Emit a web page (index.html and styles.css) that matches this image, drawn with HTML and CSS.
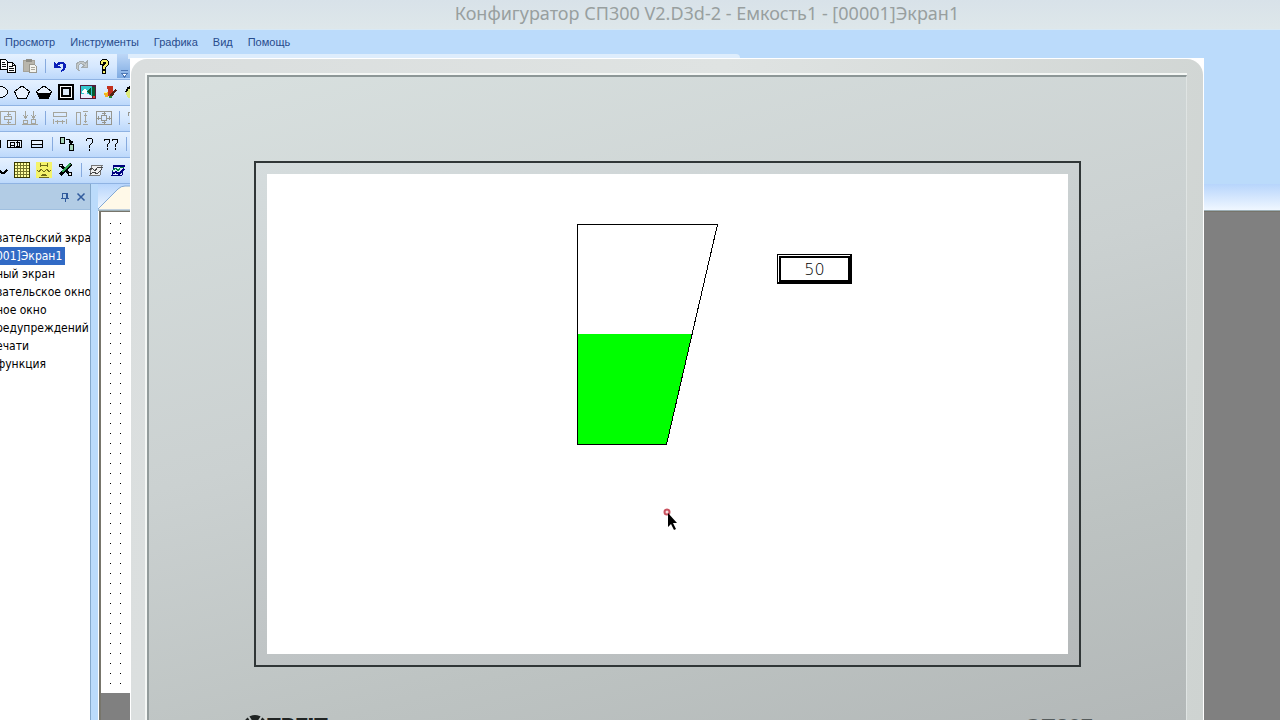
FILE: index.html
```html
<!DOCTYPE html>
<html lang="ru">

<head>
  <meta charset="UTF-8">
  <title>Конфигуратор СП300</title>
  <link rel="stylesheet" href="styles.css">
</head>

<body>

  <div class="app">
    <header class="titlebar">
      <h1>Конфигуратор СП300 V2.D3d-2 - Емкость1 - [00001]Экран1</h1>
    </header>

    <nav class="menubar">
      <a href="#">Просмотр</a>
      <a href="#">Инструменты</a>
      <a href="#">Графика</a>
      <a href="#">Вид</a>
      <a href="#">Помощь</a>
    </nav>

    <div class="toolbars">
      <div class="toolbar standard">
        <button type="button" aria-label="Копировать"><svg viewBox="0 0 16 16"><path d="M.5 1.500h5l2 2v8h-7z" fill="#fff" stroke="#000"/><path d="M2 4.500h3M2 6.500h4M2 8.500h4" stroke="#111"/><path d="M7.500 4.500h5l3 3v7h-8z" fill="#fff" stroke="#000"/><path d="M12.500 4.500v3h3M9 8.500h4M9 10.500h5M9 12.500h5" fill="none" stroke="#111"/></svg></button>
        <button type="button" aria-label="Вставить"><svg viewBox="0 0 16 16"><path d="M1.500 2.500h11v11h-11z" fill="#b9b6ac" stroke="#a5a298"/><path d="M4 1h6v3H4z" fill="#8e8c84"/><path d="M7.500 6.500h5l2 2v6h-7z" fill="#f4f4ee" stroke="#99978d"/><path d="M9 9.500h4M9 11.500h4" stroke="#aaa79c"/></svg></button>
        <span class="sep"></span>
        <button type="button" aria-label="Отменить"><svg viewBox="0 0 16 16"><path d="M2 3v7h7L6.500 7.500C9 4.500 12 6 11 9c0 2-1 3-2 4v1c3-1 5-3 5-6 0-5-6-6-9.500-2z" fill="#0a20b8"/></svg></button>
        <button type="button" aria-label="Вернуть"><svg viewBox="0 0 16 16"><path d="M13.500 3v6.500h-6l2.500-2C8 4.500 4 6 4 9c0 2 1 3 2 4-3-1-4-2-4-5 0-4 6-6 9.500-3z" fill="#c3c8c9" stroke="#a4abae"/></svg></button>
        <button type="button" aria-label="Справка"><svg viewBox="0 0 16 16"><path d="M4.500 6V3.500l2-2h4l2 2v3l-3 3V11h-3V8l3-3V4h-2v2z" fill="#f5ef6a" stroke="#000"/><path d="M6.500 12.500h3v3h-3z" fill="#f5ef6a" stroke="#000"/></svg></button>
        <button type="button" class="more" aria-label="Ещё"><svg viewBox="0 0 10 16"><path d="M2 8.500h7" stroke="#4f78b5"/><path d="M2 11h7l-3.500 4z" fill="#fff" stroke="#4f78b5"/></svg></button>
      </div>

      <div class="toolbar shapes">
        <button type="button" aria-label="Эллипс"><svg viewBox="0 0 16 16"><ellipse cx="8" cy="8" rx="7.500" ry="5.500" fill="#e9f2fd" stroke="#000"/></svg></button>
        <button type="button" aria-label="Многоугольник"><svg viewBox="0 0 16 16"><path d="M8 2l7.500 5.500-3 6.500h-9l-3-6.500z" fill="#e9f2fd" stroke="#000"/></svg></button>
        <button type="button" aria-label="Уровень в многоугольнике"><svg viewBox="0 0 16 16"><path d="M8 2l7.500 5.500-3 6.500h-9l-3-6.500z" fill="#e9f2fd" stroke="#000"/><path d="M1 9h14l-2.500 5h-9z"/></svg></button>
        <button type="button" aria-label="Рамка"><svg viewBox="0 0 16 16"><path d="M1 1h14v14H1z" fill="#fff" stroke="#000" stroke-width="2"/><path d="M4 4h8v8H4z" fill="#dce9f8" stroke="#000" stroke-width="2"/></svg></button>
        <button type="button" aria-label="Рисунок"><svg viewBox="0 0 16 16"><path d="M0 1h16v14H0z" fill="#501c3c"/><path d="M1 2h11v11H1z" fill="#35c7ce"/><path d="M1 8l4-4 3 4-3 2z" fill="#fff"/><path d="M1 10l5-1 6 3v2H1z" fill="#eef"/><path d="M7 8l4-5v9z" fill="#075c30"/><path d="M12 3h3v9h-3z" fill="#075c30"/><path d="M13 12h2v2h-2z" fill="#ef3c28"/></svg></button>
        <button type="button" aria-label="Анимация"><svg viewBox="0 0 16 16"><path d="M5 2h6v6l-4 4H4l2-4z" fill="#c3301d"/><path d="M2 8h4v5H3z" fill="#efb31e"/><path d="M8 10l5-5 2 1-6 8z" fill="#542313"/><path d="M7 12h3v2H7z" fill="#258b36"/><path d="M2 9l3-1" stroke="#fff79b"/></svg></button>
        <button type="button" aria-label="Цвет"><svg viewBox="0 0 16 16"><circle cx="8" cy="9" r="6" fill="#dce97a"/><path d="M2 8q2-6 7-5" fill="none" stroke="#000" stroke-width="2"/></svg></button>
      </div>

      <div class="toolbar align">
        <button type="button" aria-label="По центру"><svg viewBox="0 0 16 16"><path d="M.5 1.500h15v13H.5zM4.500 6.500h7v3h-7zM8.500 2v4M8.500 10v4M6.500 4.500h4M6.500 12.500h4" fill="none" stroke="#a5a59c"/></svg></button>
        <button type="button" aria-label="Вниз"><svg viewBox="0 0 16 16"><path d="M3.500 1v6M1 5l2.500 3L6 5M11.500 1v6M9 5l2.500 3L14 5M1.500 10.500h4v3h-4zM9.500 9.500h4v4h-4zM0 14.500h16" fill="none" stroke="#a5a59c"/></svg></button>
        <span class="sep"></span>
        <button type="button" aria-label="Ширина"><svg viewBox="0 0 16 16"><path d="M1.500 2.500h13v4h-13zM1.500 9v5M14.500 9v5M3 11.500h10M5.500 9.500v4M10.500 9.500v4" fill="none" stroke="#a5a59c"/></svg></button>
        <button type="button" aria-label="Высота"><svg viewBox="0 0 16 16"><path d="M2.500 2.500h4v12h-4zM9 1.500h5M9 14.500h5M11.500 3v10M10 5.500h3M10 11.500h3" fill="none" stroke="#a5a59c"/></svg></button>
        <button type="button" aria-label="Размер"><svg viewBox="0 0 16 16"><path d="M.5 1.500h15v13H.5zM5.500 5.500h5v5h-5zM8.500 2v3M8.500 11v3M1 8.500h4M11 8.500h4M6 3.500h4M6 12.500h4M2.500 6v4M13.500 6v4" fill="none" stroke="#96968f"/></svg></button>
        <span class="sep"></span>
        <button type="button" aria-label="Группа"><svg viewBox="0 0 16 16"><path d="M5 2.500H2M2.500 2v4M5 13.500H2" stroke="#96968f"/></svg></button>
      </div>

      <div class="toolbar controls">
        <button type="button" aria-label="Кнопка"><svg viewBox="0 0 16 16"><path d="M1 4.500h14v7H1z" fill="#e9f2fd" stroke="#000"/></svg></button>
        <button type="button" aria-label="Текст"><svg viewBox="0 0 16 16"><path d="M.5 4.500h14v7H.5z" fill="#e9f2fd" stroke="#000"/><path d="M3.500 12V6.500h4V12M4 9.500h3M10.500 5v6M9 6.500h3v4H9" fill="none" stroke="#000"/></svg></button>
        <button type="button" aria-label="Ввод"><svg viewBox="0 0 16 16"><path d="M2.500 4.500h11v4h-11z" fill="#e9f2fd" stroke="#000"/><path d="M2.500 9v2.500h11V9" fill="none" stroke="#000"/></svg></button>
        <span class="sep"></span>
        <button type="button" aria-label="Заменить"><svg viewBox="0 0 16 16"><path d="M1.500 1.500h4v6h-4zM10.500 8.500h4v6h-4z" fill="#a9d6b8" stroke="#000"/><path d="M7 3.500h3l2 2v2M10 5.500l2 2 2-2" fill="none" stroke="#000"/></svg></button>
        <button type="button" aria-label="Помощь"><svg viewBox="0 0 16 16"><path d="M5.500 5V3.500l1-1h4l1 1v3l-3 3v2M8.500 13v2" fill="none" stroke="#000"/></svg></button>
        <button type="button" aria-label="Контекстная помощь"><svg viewBox="0 0 16 16"><path d="M1.500 5V3.500h5v3l-2 2V11M4.500 12v2M9.500 5V3.500h5v3l-2 2V11M12.500 12v2" fill="none" stroke="#000"/></svg></button>
        <span class="sep"></span>
      </div>

      <div class="toolbar charts">
        <button type="button" aria-label="Кривая"><svg viewBox="0 0 16 16"><path d="M7 8l3 3h2l3-3" fill="none" stroke="#000" stroke-width="2"/></svg></button>
        <button type="button" aria-label="Таблица"><svg viewBox="0 0 16 16"><path d="M.5.500h15v15H.5z" fill="#ffffa0" stroke="#373700"/><path d="M3.500 1v14M6.500 1v14M9.500 1v14M12.500 1v14M1 3.500h14M1 6.500h14M1 9.500h14M1 12.500h14" stroke="#76762e"/></svg></button>
        <button type="button" aria-label="График"><svg viewBox="0 0 16 16"><path d="M0 0h16v16H0z" fill="#f4f36b"/><path d="M4.500 1v4M11.500 1v4M4 3.500h8M1 8l2 2 2-3 3 3 3-3 2 3 2-2M5 13.500h6M6 12.500h4M3 15.500h10" fill="none" stroke="#706c18"/></svg></button>
        <button type="button" aria-label="Инструменты"><svg viewBox="0 0 16 16"><path d="M2 3l11 10M13 2L2 13" stroke="#000" stroke-width="3"/><path d="M4 10l8-8" stroke="#35a653" stroke-width="2"/><path d="M1.500 2.500h3v2h-3zM10.500 10.500h3v3h-3z" fill="#eee" stroke="#000"/></svg></button>
        <span class="sep"></span>
        <button type="button" aria-label="Тренд"><svg viewBox="0 0 16 16"><path d="M4 3.500h10l-2 10H2z" fill="#eee" stroke="#777"/><path d="M1 8l3-2 3 3 3-4 5 1M2 12l4-2 3 2 5-5" fill="none" stroke="#444"/></svg></button>
        <button type="button" aria-label="Тренд в реальном времени"><svg viewBox="0 0 16 16"><path d="M4 3.500h10l-2 10H2z" fill="#dcecff" stroke="#000080"/><path d="M4 4h11" stroke="#000080" stroke-width="2"/><path d="M2 12l4-2 3 2 5-5" fill="none" stroke="#000080" stroke-width="2"/><path d="M2 9l4-3 2 3 3-4 3 1" fill="none" stroke="#078743"/></svg></button>
      </div>
    </div>

    <main class="workspace">
      <aside class="project">
        <div class="project-head">
          <button type="button" aria-label="Закрепить"><svg viewBox="0 0 10 10"><path d="M2.500 1v5M7.500 1v5M2 1.500h6M1 6.500h8M5 7v3M6.500 2v4" stroke="#315b9d"/></svg></button>
          <button type="button" aria-label="Закрыть"><svg viewBox="0 0 10 10"><path d="M1.500 1.500l7 7M8.500 1.500l-7 7" stroke="#315b9d" stroke-width="1.500" shape-rendering="auto"/></svg></button>
        </div>
        <ul class="tree">
          <li>вательский экран</li>
          <li class="selected"><span>001]Экран1</span></li>
          <li>ный экран</li>
          <li>вательское окно</li>
          <li>ное окно</li>
          <li>редупреждений</li>
          <li>ечати</li>
          <li>функция</li>
        </ul>
      </aside>

      <section class="editor">
        <div class="tabs">
          <svg class="tab" viewBox="0 0 60 26"><path d="M0 25L20 5q3-3 7-3h33v24H0z" fill="#fff9e8" stroke="#83a9d4"/></svg>
        </div>
        <div class="document">
          <svg class="page" shape-rendering="crispEdges">
            <pattern id="grid" x="9" y="11" width="10" height="10" patternUnits="userSpaceOnUse">
              <rect width="1" height="1" fill="#000"/>
            </pattern>
            <rect x="9" y="11" width="100%" height="100%" fill="url(#grid)"/>
          </svg>
        </div>
      </section>
    </main>

    <div class="caption-strip"></div>

    <!-- simulator window over the editor -->
    <div class="simulator">
      <div class="frame">
        <div class="panel">
          <div class="bezel">
            <div class="screen">
              <svg class="tank" viewBox="0 0 142 222" shape-rendering="crispEdges">
                <path d="M1 110h114L90 220H1z" fill="#0f0"/>
                <path d="M.5.500h140l-51 220H.5z" fill="none" stroke="#000"/>
              </svg>
              <input class="level" type="text" value="50" aria-label="Уровень">
              <svg class="pointer" viewBox="0 0 14 24">
                <circle cx="4" cy="5" r="2.500" fill="#f7dfe0" stroke="#ca5360" stroke-width="2"/>
                <path d="M5 6v14l3-3 3 6 2-1-3-6h4z" fill="#000"/>
              </svg>
            </div>
          </div>
          <div class="brand">
            <div class="maker">
              <svg viewBox="0 0 24 24"><circle cx="12" cy="12" r="12" fill="#202423"/><path d="M12 12L5 1M12 12l7-11M0 12h24" stroke="#bdc3c2" stroke-width="2"/><circle cx="12" cy="12" r="4" fill="#bdc3c2"/></svg>
              <span>TREIT</span>
            </div>
            <span class="model">СП307</span>
          </div>
        </div>
      </div>
    </div>
  </div>

</body>

</html>
```

FILE: styles.css
```css
* {
  box-sizing: border-box;
}

body {
  margin: 0;
  font-family: "DejaVu Sans Condensed", "Noto Sans", sans-serif;
  font-size: 12px;
}

button {
  padding: 0;
  border: none;
  background: none;
}

.app {
  position: relative;
  display: flex;
  flex-direction: column;
  height: 100vh;
  overflow: hidden;
  background: #bbdbfb;
}

.titlebar {
  height: 30px;
  padding: 0 0 4px 134px;
  display: flex;
  align-items: center;
  justify-content: center;
  background: linear-gradient(#d8e2e9, #dee7ea);
  border-bottom: 1px solid #d9e9f5;
}

.titlebar h1 {
  margin: 0;
  font-family: "Noto Sans", sans-serif;
  font-size: 18px;
  font-weight: normal;
  line-height: 24px;
  color: #989f9f;
  white-space: nowrap;
}

.menubar {
  height: 24px;
  padding-left: 5px;
  display: flex;
  align-items: center;
  gap: 15px;
}

.menubar a {
  font-family: "Liberation Sans", sans-serif;
  font-size: 11px;
  color: #284b8c;
  text-decoration: none;
}

.toolbars {
  width: 131px;
  height: 130px;
  overflow: hidden;
}

.toolbar {
  display: flex;
  align-items: center;
  height: 26px;
  padding-bottom: 1px;
  border-bottom: 1px solid #8fb3e3;
  background: linear-gradient(#e5f1ff, #d6e8fe 50%, #bcd8fb);
}

.toolbar button {
  flex: none;
  display: flex;
  justify-content: center;
  width: 22px;
}

.toolbar svg {
  width: 16px;
  height: 16px;
  fill: #000;
  shape-rendering: crispEdges;
}

.toolbar .sep {
  flex: none;
  width: 1px;
  height: 14px;
  margin: 0 3px 0 4px;
  background: #86aade;
}

.standard button:first-child,
.align button:first-child {
  margin-left: -3px;
}

.shapes button:first-child,
.charts button:first-child {
  margin-left: -11px;
}

.controls button:first-child {
  margin-left: -18px;
}

.toolbar .more {
  width: 13px;
  height: 24px;
  margin-left: 2px;
  align-items: flex-end;
  background: linear-gradient(#bdd7f7, #7fabe2);
}

.more svg {
  width: 10px;
}

.workspace {
  flex: 1;
  min-height: 0;
  display: flex;
}

.project {
  width: 91px;
  overflow: hidden;
  background: #fff;
  border-right: 1px solid #84a8cb;
}

.project-head {
  height: 26px;
  padding: 0 4px;
  display: flex;
  align-items: center;
  justify-content: flex-end;
  gap: 6px;
  background: #b2cce5;
  border-bottom: 1px solid #9fbfdf;
}

.project-head svg {
  display: block;
  width: 10px;
  height: 10px;
  fill: none;
  shape-rendering: crispEdges;
}

.tree {
  list-style: none;
  margin: 0 0 0 -4px;
  padding: 19px 0 0;
}

.tree li {
  height: 18px;
  line-height: 18px;
  white-space: nowrap;
}

.tree .selected span {
  display: inline-block;
  padding-right: 3px;
  color: #fff;
  background: #316ac5;
}

.editor {
  flex: 1;
  margin-left: 7px;
  display: flex;
  flex-direction: column;
  background: #fff;
}

.tabs {
  height: 27px;
  background: linear-gradient(#b7d5fc, #f0f7ff);
  border-bottom: 1px solid #9dafb6;
}

.tab {
  display: block;
  width: 60px;
  height: 26px;
}

.document {
  flex: 1;
  margin-left: 1px;
  border-top: 1px solid #77756b;
  border-left: 2px solid #77756b;
  background: #808080;
}

.page {
  display: block;
  height: calc(100% - 27px);
  width: 800px;
  background: #fff;
}

.caption-strip {
  position: absolute;
  top: 54px;
  left: 128px;
  width: 612px;
  height: 5px;
  border-top-right-radius: 4px;
  background: #deedfc;
}

.simulator {
  position: absolute;
  top: 58px;
  right: 76px;
  bottom: 0;
  left: 130px;
  padding: 1px 1px 0;
  overflow: hidden;
  background: #fff;
}

.frame {
  height: 100%;
  padding: 16px 16px 0;
  border-radius: 16px 16px 0 0;
  background: linear-gradient(100deg, #dadede, #dfe3e2 50%, #ced3d1);
}

.panel {
  height: 100%;
  padding: 84px 105px 0;
  overflow: hidden;
  border-top: 2px solid #8d9797;
  border-left: 2px solid #929b9b;
  border-right: 1px solid #dfe4e3;
  box-shadow: -1px -1px 0 1px #f4f7f5;
  background: linear-gradient(165deg, #d8e0df, #cbd1d1 45%, #bdc3c2 75%, #b3b8b8);
}

.bezel {
  padding: 11px;
  border: 2px solid #303637;
  background: linear-gradient(165deg, #d5dcdd, #b5b9ba);
}

.screen {
  position: relative;
  height: 480px;
  background: #fff;
}

/* objects placed on the panel screen */
.tank {
  position: absolute;
  top: 50px;
  left: 310px;
  width: 142px;
  height: 222px;
}

.level {
  position: absolute;
  top: 80px;
  left: 510px;
  width: 75px;
  height: 30px;
  padding: 0;
  border: 1px solid #000;
  outline: 2px solid #000;
  outline-offset: -4px;
  box-shadow: inset -1px -1px #000;
  background: #fff;
  font-family: "DejaVu Sans", sans-serif;
  font-weight: 200;
  font-size: 16px;
  text-align: center;
}

.pointer {
  position: absolute;
  top: 333px;
  left: 396px;
  width: 14px;
  height: 24px;
}

.brand {
  display: flex;
  align-items: flex-start;
  justify-content: space-between;
  margin: 48px -12px 0 -11px;
  color: #202423;
}

.maker {
  display: flex;
}

.maker svg {
  width: 24px;
  height: 24px;
}

.maker span,
.model {
  font-family: "Liberation Sans", sans-serif;
  font-size: 22px;
  font-weight: bold;
  line-height: 24px;
}

.maker span {
  font-family: Roboto, sans-serif;
  font-weight: 900;
}

.model {
  color: #555b5b;
}
```
